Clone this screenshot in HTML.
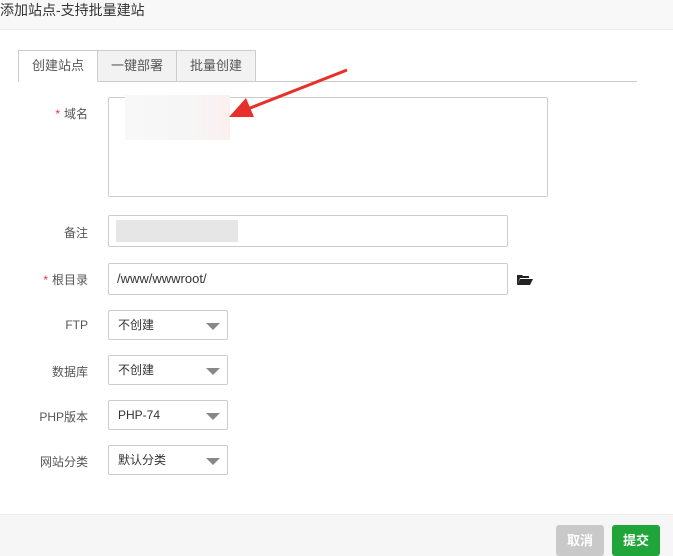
<!DOCTYPE html>
<html><head><meta charset="utf-8"><style>
*{box-sizing:border-box;margin:0;padding:0}
body{width:673px;height:556px;background:#fff;font-family:"Liberation Sans","Noto Sans CJK SC",sans-serif;font-size:12px;color:#333;position:relative;overflow:hidden}
.hd{position:absolute;left:0;top:0;width:673px;height:30px;background:#f8f8f8;border-bottom:1px solid #eee;font-size:14px;line-height:20px;padding-left:0;color:#333}
.tabs{position:absolute;left:18px;top:50px;width:619px;height:32px;border-bottom:1px solid #ccc}
.tab{position:absolute;top:0;height:32px;width:80px;border:1px solid #ccc;background:#f2f2f2;text-align:center;line-height:30px;font-size:13px;color:#555}
.tab.a{background:#fff;border-bottom-color:#fff}
.lb{position:absolute;width:88px;text-align:right;font-size:12px;color:#555}
.lb i{color:#e33;font-style:normal;margin-right:4px}
.in{position:absolute;border:1px solid #ccc;border-radius:2px;background:#fff}
.sel{position:absolute;left:108px;width:120px;height:30px;border:1px solid #ccc;border-radius:2px;line-height:28px;padding-left:9px;font-size:12px;color:#333}
.sel:after{content:"";position:absolute;right:7px;top:12px;border-left:7px solid transparent;border-right:7px solid transparent;border-top:7px solid #888}
.ft{position:absolute;left:0;top:514px;width:673px;height:42px;background:#f6f6f6;border-top:1px solid #eee}
.bt{position:absolute;top:525px;height:31px;width:48px;border-radius:3px;color:#fff;font-size:13px;font-weight:bold;text-align:center;line-height:31px}
</style></head><body>
<div class="hd">添加站点-支持批量建站</div>
<div class="tabs">
<div class="tab" style="left:79px">一键部署</div>
<div class="tab" style="left:158px">批量创建</div>
<div class="tab a" style="left:0">创建站点</div>
</div>
<div class="lb" style="left:0;top:105px"><i>*</i>域名</div>
<div class="in" style="left:108px;top:97px;width:440px;height:100px"></div>
<div style="position:absolute;left:125px;top:95px;width:105px;height:45px;background:linear-gradient(90deg,#f8f8f8,#f6f6f6 60%,#fcefef)"></div>
<div class="lb" style="left:0;top:224px">备注</div>
<div class="in" style="left:108px;top:215px;width:400px;height:32px"></div>
<div style="position:absolute;left:116px;top:220px;width:122px;height:22px;background:#e6e6e6"></div>
<div class="lb" style="left:0;top:271px"><i>*</i>根目录</div>
<div class="in" style="left:108px;top:263px;width:400px;height:32px;line-height:30px;padding-left:8px;font-size:13px;color:#333">/www/wwwroot/</div>
<svg style="position:absolute;left:517px;top:274px" width="16" height="12" viewBox="0 0 16 12"><path d="M0 1h5l1 1h6v2H3L0 11z" fill="#222"/><path d="M3 5h13l-3 6H0z" fill="#222"/></svg>
<div class="lb" style="left:0;top:318px">FTP</div>
<div class="sel" style="top:310px">不创建</div>
<div class="lb" style="left:0;top:363px">数据库</div>
<div class="sel" style="top:355px">不创建</div>
<div class="lb" style="left:0;top:408px">PHP版本</div>
<div class="sel" style="top:400px">PHP-74</div>
<div class="lb" style="left:0;top:453px">网站分类</div>
<div class="sel" style="top:445px">默认分类</div>
<svg style="position:absolute;left:0;top:0" width="673" height="556"><line x1="347" y1="70" x2="245" y2="110" stroke="#e8302a" stroke-width="3"/><path d="M229 117L246 98L254 117Z" fill="#e8302a"/></svg>
<div class="ft"></div>
<div class="bt" style="left:556px;background:#c9c9c9">取消</div>
<div class="bt" style="left:612px;background:#20a53a">提交</div>
</body></html>
